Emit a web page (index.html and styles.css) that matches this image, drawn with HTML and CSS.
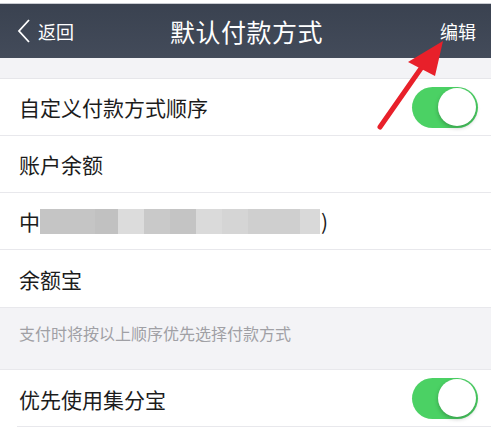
FILE: index.html
```html
<!DOCTYPE html>
<html>
<head>
    <meta charset="utf-8" />
    <title>默认付款方式</title>
    <link rel="stylesheet" href="styles.css">
</head>
<body>
    <div class="page">
        <div class="topline"></div>
        <div class="navbar">
            <div class="nav-left">
                <svg class="chevron" width="14" height="24" viewBox="0 0 14 24">
                    <path d="M12 1 L2 12 L12 23" fill="none" stroke="#fff" stroke-width="1.8"/>
                </svg>
                <span>返回</span>
            </div>
            <div class="nav-title">默认付款方式</div>
            <div class="nav-right">编辑</div>
        </div>

        <div class="gap"></div>

        <div class="group">
            <div class="row">
                <span>自定义付款方式顺序</span>
                <div class="switch on"><div class="knob"></div></div>
            </div>
            <div class="row">
                <span>账户余额</span>
            </div>
            <div class="row">
                <span>中</span>
                <span class="masked">
                    <i class="blur b1"></i><i class="blur b2"></i><i class="blur b3"></i><i class="blur b4"></i><i class="blur b5"></i><i class="blur b6"></i><i class="blur b7"></i><i class="blur b8"></i><i class="blur b9"></i>
                </span>
                <span>)</span>
            </div>
            <div class="row last">
                <span>余额宝</span>
            </div>
        </div>

        <div class="note">支付时将按以上顺序优先选择付款方式</div>

        <div class="group">
            <div class="row inset">
                <span>优先使用集分宝</span>
                <div class="switch on"><div class="knob"></div></div>
            </div>
        </div>

        <!-- annotation arrow pointing at 编辑 -->
        <svg class="arrow" width="491" height="442" viewBox="0 0 491 442">
            <line x1="380" y1="127" x2="424" y2="64" stroke="#e8202a" stroke-width="5" stroke-linecap="round"/>
            <polygon points="443,41 408,62 435,76" fill="#e8202a"/>
        </svg>
    </div>
</body>
</html>
```

FILE: styles.css
```css
body {
    margin: 0;
    background: #fff;
    font-family: "Noto Sans CJK SC", "Noto Sans", sans-serif;
}
.page {
    position: relative;
    width: 491px;
    height: 442px;
    overflow: hidden;
    background: #fff;
}
.topline {
    height: 3px;
    background: #fff;
    border-bottom: 1px solid #c9ccd2;
}
.navbar {
    height: 54px;
    background: linear-gradient(#3a4250, #434b5a);
    color: #fff;
    display: flex;
    align-items: center;
    justify-content: space-between;
    padding: 0 15px 0 17px;
}
.nav-left {
    display: flex;
    align-items: center;
    gap: 7px;
    font-size: 18px;
    width: 90px;
}
.nav-title {
    font-size: 25px;
    letter-spacing: 0.5px;
}
.nav-right {
    font-size: 18px;
    width: 90px;
    text-align: right;
}
.gap {
    height: 21px;
    background: #f3f3f6;
    border-bottom: 1px solid #e6e6ea;
    box-sizing: border-box;
}
.group {
    background: #fff;
}
.row {
    height: 57px;
    box-sizing: border-box;
    display: flex;
    align-items: center;
    padding: 0 13px 0 19px;
    font-size: 21px;
    color: #1c1c1c;
    border-bottom: 1px solid #e8e8ec;
}
.row .switch {
    margin-left: auto;
}
.row.last {
    height: 58px;
}
.row.inset {
    border-bottom: none;
    background: linear-gradient(#e8e8ec, #e8e8ec) no-repeat 17px 100% / 474px 1px;
}
.masked {
    display: flex;
    height: 25px;
    margin: 0 1px 0 0;
}
.blur {
    display: block;
    height: 25px;
}
.b1 { width: 55px; background: #c5c5c5; }
.b2 { width: 23px; background: #c1c1c1; }
.b3 { width: 26px; background: #dcdcdc; }
.b4 { width: 26px; background: #c9c9c9; }
.b5 { width: 26px; background: #c4c4c4; }
.b6 { width: 26px; background: #dadada; }
.b7 { width: 26px; background: #d5d5d5; }
.b8 { width: 52px; background: #cfcfcf; }
.b9 { width: 20px; background: #d9d9d9; }
.note {
    height: 62px;
    box-sizing: border-box;
    background: #f3f3f6;
    color: #a0a0a5;
    font-size: 16px;
    padding: 13px 19px 0;
    border-bottom: 1px solid #e8e8ec;
}
.switch {
    width: 66px;
    height: 41px;
    border-radius: 21px;
    background: #4bd164;
    position: relative;
    box-sizing: border-box;
}
.knob {
    position: absolute;
    right: 2px;
    top: 1px;
    width: 38px;
    height: 38px;
    border-radius: 50%;
    background: #fff;
    box-shadow: 0 2px 4px rgba(0,0,0,0.25);
}
.arrow {
    position: absolute;
    left: 0;
    top: 0;
    pointer-events: none;
}
```
